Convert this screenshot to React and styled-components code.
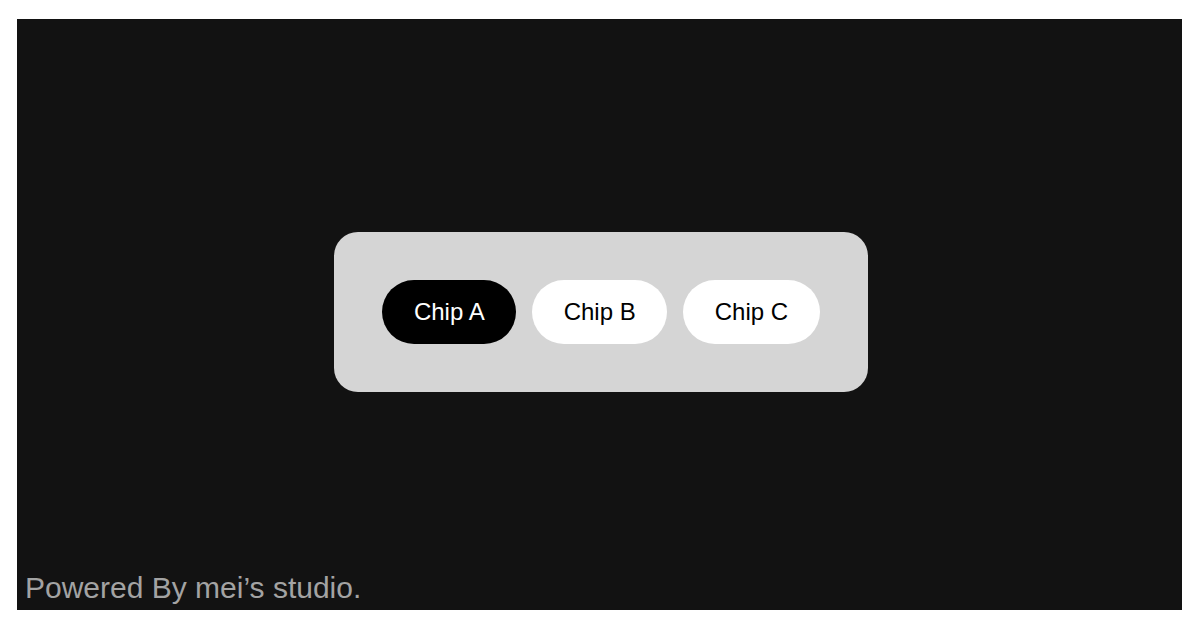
import { useState } from 'react';
import styled, { createGlobalStyle } from 'styled-components';

const GlobalStyles = createGlobalStyle`
  html, body {
    margin: 0;
    padding: 0;
    background: #ffffff;
  }

  body {
    font-family: "Liberation Sans", Arial, sans-serif;
  }
`;

const chips = ['Chip A', 'Chip B', 'Chip C'];

export default function App() {
  const [active, setActive] = useState(0);

  return (
    <>
      <GlobalStyles />
      <Page>
        <Stage>
          <ChipGroup>
            {chips.map((label, i) => (
              <Chip
                key={label}
                type="button"
                $active={i === active}
                onClick={() => setActive(i)}
              >
                {label}
              </Chip>
            ))}
          </ChipGroup>

          <Credit>Powered By mei’s studio.</Credit>
        </Stage>
      </Page>
    </>
  );
}

const Page = styled.div`
  box-sizing: border-box;
  width: 100%;
  height: 630px;
  padding: 19px 18px 20px 17px;
`;

const Stage = styled.section`
  position: relative;
  box-sizing: border-box;
  display: flex;
  width: 100%;
  height: 100%;
  padding: 0 0 5px 3px;
  justify-content: center;
  align-items: center;
  background: #121212;
`;

const ChipGroup = styled.div`
  display: flex;
  gap: 16px;
  padding: 48px;
  border-radius: 24px;
  background: #d5d5d5;
`;

const Chip = styled.button`
  display: flex;
  height: 64px;
  padding: 0 31.5px;
  align-items: center;
  justify-content: center;
  border: none;
  border-radius: 32px;
  font-family: "Liberation Sans", Arial, sans-serif;
  font-size: 24px;
  line-height: 1;
  cursor: pointer;
  color: ${({ $active }) => ($active ? '#ffffff' : '#000000')};
  background: ${({ $active }) => ($active ? '#000000' : '#ffffff')};
`;

const Credit = styled.p`
  position: absolute;
  left: 8px;
  bottom: 5px;
  margin: 0;
  color: #a3a3a3;
  font-size: 30px;
`;
